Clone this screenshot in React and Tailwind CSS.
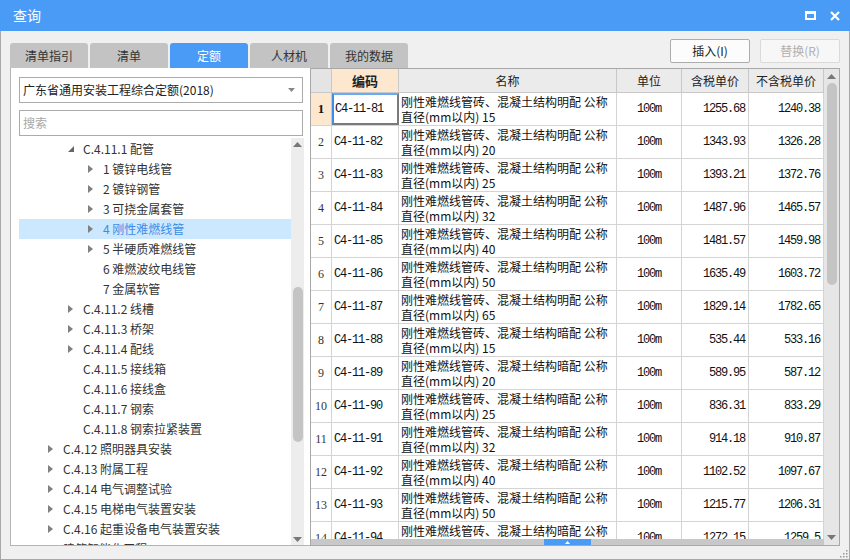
import React from 'react';

const tabs = ['清单指引', '清单', '定额', '人材机', '我的数据'];

const treeRows = [
  { lv: 2, arrow: 'open', text: 'C.4.11.1 配管' },
  { lv: 3, arrow: 'closed', text: '1 镀锌电线管' },
  { lv: 3, arrow: 'closed', text: '2 镀锌钢管' },
  { lv: 3, arrow: 'closed', text: '3 可挠金属套管' },
  { lv: 3, arrow: 'closed', text: '4 刚性难燃线管', selected: true },
  { lv: 3, arrow: 'closed', text: '5 半硬质难燃线管' },
  { lv: 3, text: '6 难燃波纹电线管' },
  { lv: 3, text: '7 金属软管' },
  { lv: 2, arrow: 'closed', text: 'C.4.11.2 线槽' },
  { lv: 2, arrow: 'closed', text: 'C.4.11.3 桥架' },
  { lv: 2, arrow: 'closed', text: 'C.4.11.4 配线' },
  { lv: 2, text: 'C.4.11.5 接线箱' },
  { lv: 2, text: 'C.4.11.6 接线盒' },
  { lv: 2, text: 'C.4.11.7 钢索' },
  { lv: 2, text: 'C.4.11.8 钢索拉紧装置' },
  { lv: 1, arrow: 'closed', text: 'C.4.12 照明器具安装' },
  { lv: 1, arrow: 'closed', text: 'C.4.13 附属工程' },
  { lv: 1, arrow: 'closed', text: 'C.4.14 电气调整试验' },
  { lv: 1, arrow: 'closed', text: 'C.4.15 电梯电气装置安装' },
  { lv: 1, arrow: 'closed', text: 'C.4.16 起重设备电气装置安装' },
  { lv: 0, text: 'C.5 建筑智能化工程' },
];

const indent = ['pl-[6px]', 'pl-[26px]', 'pl-[46px]', 'pl-[66px]'];

const rows = [
  ['C4-11-81', '明配', '15', '1255.68', '1240.38'],
  ['C4-11-82', '明配', '20', '1343.93', '1326.28'],
  ['C4-11-83', '明配', '25', '1393.21', '1372.76'],
  ['C4-11-84', '明配', '32', '1487.96', '1465.57'],
  ['C4-11-85', '明配', '40', '1481.57', '1459.98'],
  ['C4-11-86', '明配', '50', '1635.49', '1603.72'],
  ['C4-11-87', '明配', '65', '1829.14', '1782.65'],
  ['C4-11-88', '暗配', '15', '535.44', '533.16'],
  ['C4-11-89', '暗配', '20', '589.95', '587.12'],
  ['C4-11-90', '暗配', '25', '836.31', '833.29'],
  ['C4-11-91', '暗配', '32', '914.18', '910.87'],
  ['C4-11-92', '暗配', '40', '1102.52', '1097.67'],
  ['C4-11-93', '暗配', '50', '1215.77', '1206.31'],
  ['C4-11-94', '暗配', '65', '1272.15', '1259.5'],
];

const mono = "font-['Liberation_Mono','Noto_Sans_CJK_SC',monospace] text-[12px] tracking-[-1.2px]";

const UpArrow = () => (
  <svg width="9" height="5" viewBox="0 0 9 5"><path d="M0 5 L4.5 0 L9 5 Z" fill="#777" /></svg>
);
const DownArrow = () => (
  <svg width="9" height="5" viewBox="0 0 9 5"><path d="M0 0 L4.5 5 L9 0 Z" fill="#777" /></svg>
);

const App = () => {
  return (
    <div className="w-[850px] h-[560px] flex flex-col overflow-hidden relative bg-[#f0f0f0] text-[#222] font-['Noto_Sans_CJK_SC',sans-serif]">
      {/* 标题栏 */}
      <div className="h-[31px] shrink-0 bg-[#4a9bf6] flex items-center justify-between pl-[13px] pr-[10px]">
        <span className="text-white text-[14px]">查询</span>
        <div className="flex items-center gap-[14px]">
          <svg width="11" height="9" viewBox="0 0 11 9">
            <rect x="1" y="1.5" width="9" height="6.5" fill="none" stroke="#fff" strokeWidth="2" />
            <rect x="0" y="0" width="11" height="3" fill="#fff" />
          </svg>
          <svg width="10" height="10" viewBox="0 0 10 10">
            <path d="M1 1 L9 9 M9 1 L1 9" stroke="#fff" strokeWidth="2.2" />
          </svg>
        </div>
      </div>

      <div className="flex-1 flex flex-col border-x border-b border-[#a8a8a8]">
        {/* 选项卡 + 按钮 */}
        <div className="h-[37px] shrink-0 flex justify-between pl-[9px] pr-[9px]">
          <div className="flex items-end gap-[2px]">
            {tabs.map((t) => (
              <div
                key={t}
                className={
                  t === '定额'
                    ? 'w-[78px] h-[25px] rounded-t-[3px] bg-[#4a9bf6] text-white text-[12px] flex items-center justify-center'
                    : 'w-[78px] h-[25px] rounded-t-[3px] bg-[#c3c3c3] text-[#333] text-[12px] flex items-center justify-center'
                }
              >
                {t}
              </div>
            ))}
          </div>
          <div className="flex gap-[10px] mt-[8px] h-[24px]">
            <div className="w-[80px] h-[24px] rounded-[2px] border border-[#adadad] bg-[#fcfcfc] text-[12px] text-[#222] flex items-center justify-center">插入(I)</div>
            <div className="w-[80px] h-[24px] rounded-[2px] border border-[#dadada] bg-[#f7f7f7] text-[12px] text-[#b0b0b0] flex items-center justify-center">替换(R)</div>
          </div>
        </div>

        {/* 主体 */}
        <div className="h-[478px] shrink-0 flex pl-[9px]">
          {/* 左侧树 */}
          <div className="w-[300px] h-full bg-white border-l border-b border-[#b4b4b4] flex flex-col">
            <div className="ml-[8px] mt-[9px] w-[284px] h-[26px] border border-[#ababab] flex items-center justify-between pl-[3px] pr-[7px] text-[12px]">
              <span>广东省通用安装工程综合定额(2018)</span>
              <svg width="7" height="4" viewBox="0 0 7 4"><path d="M0 0 L3.5 4 L7 0 Z" fill="#888" /></svg>
            </div>
            <div className="ml-[8px] mt-[7px] w-[284px] h-[26px] border border-[#ababab] flex items-center pl-[3px] text-[12px] text-[#a8a8a8]">
              搜索
            </div>
            <div className="flex-1 mt-[2px] flex min-h-0">
              <div className="flex-1 ml-[8px] pt-[1px] overflow-hidden">
                {treeRows.map((r, i) => (
                  <div
                    key={i}
                    className={
                      (r.selected ? 'bg-[#cce8ff] text-[#3d8de6] ' : 'text-[#333] ') +
                      'h-[20px] flex items-center whitespace-nowrap text-[12px] ' +
                      indent[r.lv]
                    }
                  >
                    <span className="w-[18px] h-[20px] flex items-center">
                      {r.arrow === 'closed' && (
                        <svg className="ml-[3px]" width="5" height="8" viewBox="0 0 5 8"><path d="M0 0 L5 4 L0 8 Z" fill="#808080" /></svg>
                      )}
                      {r.arrow === 'open' && (
                        <svg className="ml-[3px]" width="6" height="6" viewBox="0 0 6 6"><path d="M6 0 L6 6 L0 6 Z" fill="#666" /></svg>
                      )}
                    </span>
                    <span>{r.text}</span>
                  </div>
                ))}
              </div>
              <div className="w-[13px] mr-[6px] bg-[#ededed] flex flex-col items-center">
                <div className="h-[12px] flex items-center justify-center"><UpArrow /></div>
                <div className="flex-1 w-full flex flex-col items-center">
                  <div className="h-[137px]" />
                  <div className="w-[10px] h-[155px] rounded-[5px] bg-[#c4c4c4]" />
                  <div className="flex-1" />
                </div>
                <div className="h-[12px] flex items-center justify-center"><DownArrow /></div>
              </div>
            </div>
          </div>

          {/* 右侧表格 */}
          <div className="w-[530px] h-full border border-[#a8a8a8] bg-white flex">
            <div className="w-[513px] flex flex-col">
              <div className="h-[24px] shrink-0 flex bg-[#ebebeb] border-b border-[#c8c8c8] text-[12px] text-[#222]">
                <div className="w-[21px] border-r border-[#c8c8c8] bg-[#e4e4e4]" />
                <div className="w-[67px] border-r border-[#c8c8c8] bg-[#fde8cf] font-bold text-[13px] flex items-center justify-center">编码</div>
                <div className="w-[218px] border-r border-[#c8c8c8] flex items-center justify-center">名称</div>
                <div className="w-[65px] border-r border-[#c8c8c8] flex items-center justify-center">单位</div>
                <div className="w-[67px] border-r border-[#c8c8c8] flex items-center justify-center">含税单价</div>
                <div className="w-[75px] border-r border-[#c8c8c8] flex items-center justify-center">不含税单价</div>
              </div>
              <div className="flex-1 min-h-0 overflow-hidden">
                {rows.map((r, i) => (
                  <div key={i} className="h-[33px] flex border-b border-[#d4d4d4] text-[#111]">
                    <div
                      className={
                        i === 0
                          ? "w-[21px] shrink-0 border-r border-[#c8c8c8] bg-[#fde8cf] flex items-center justify-center font-['Liberation_Serif',serif] font-bold text-[13px]"
                          : "w-[21px] shrink-0 border-r border-[#d4d4d4] flex items-center justify-center font-['Liberation_Serif',serif] text-[12px] text-[#333]"
                      }
                    >
                      {i + 1}
                    </div>
                    <div
                      className={
                        i === 0
                          ? 'w-[67px] shrink-0 border-2 border-l-[#3b8cf0] border-t-[#6aaaf5] border-r-[#7a7a7a] border-b-[#7a7a7a] flex items-center pl-[1px] ' + mono
                          : 'w-[67px] shrink-0 border-r border-[#d4d4d4] flex items-center pl-[2px] ' + mono
                      }
                    >
                      {r[0]}
                    </div>
                    <div className="w-[218px] shrink-0 border-r border-[#d4d4d4] flex flex-col justify-center pl-[2px] text-[12px] leading-[15px] whitespace-nowrap overflow-hidden">
                      <span>刚性难燃线管砖、混凝土结构{r[1]} 公称</span>
                      <span>直径(mm以内) {r[2]}</span>
                    </div>
                    <div className={'w-[65px] shrink-0 border-r border-[#d4d4d4] flex items-center justify-center ' + mono}>100m</div>
                    <div className={'w-[67px] shrink-0 border-r border-[#d4d4d4] flex items-center justify-end pr-[3px] ' + mono}>{r[3]}</div>
                    <div className={'w-[75px] shrink-0 border-r border-[#d4d4d4] flex items-center justify-end pr-[3px] ' + mono}>{r[4]}</div>
                  </div>
                ))}
              </div>
              <div className="h-[6px] shrink-0 bg-[#c8c8c8] flex justify-center">
                <div className="w-[47px] h-[6px] bg-[#4a9bf6] flex items-center justify-center">
                  <svg width="5" height="3" viewBox="0 0 5 3"><path d="M0 3 L2.5 0 L5 3 Z" fill="#fff" /></svg>
                </div>
              </div>
            </div>
            <div className="w-[15px] bg-[#e6e6e6] flex flex-col items-center">
              <div className="h-[14px] flex items-center justify-center"><UpArrow /></div>
              <div className="w-[10px] h-[202px] rounded-[5px] bg-[#c4c4c4]" />
              <div className="flex-1" />
              <div className="h-[16px] flex items-center justify-center"><DownArrow /></div>
            </div>
          </div>
        </div>
      </div>

      {/* 右下角拖拽手柄 */}
      <svg className="absolute right-[2px] bottom-[2px]" width="9" height="9" viewBox="0 0 9 9">
        {[[7, 1], [7, 4], [4, 4], [7, 7], [4, 7], [1, 7]].map(([x, y], k) => (
          <rect key={k} x={x} y={y} width="1.5" height="1.5" fill="#999" />
        ))}
      </svg>
    </div>
  );
};

export default App;
